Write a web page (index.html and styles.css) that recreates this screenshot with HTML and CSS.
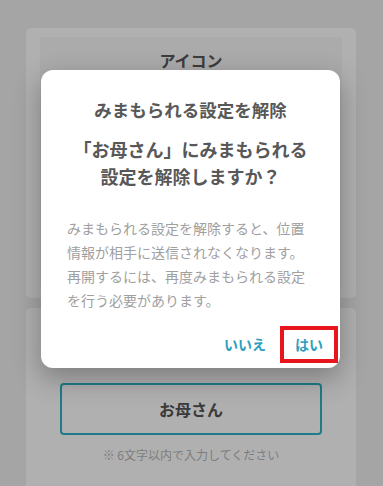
FILE: index.html
```html
<!DOCTYPE html>
<html lang="ja">
<head>
<meta charset="utf-8">
<title>みまもられる設定を解除</title>
<link rel="stylesheet" href="styles.css">
</head>
<body>
<main class="page">
  <section class="card card-icon">
    <div class="icon-area">
      <h2 class="icon-title">アイコン</h2>
    </div>
  </section>
  <section class="card card-name">
    <div class="name-input">お母さん</div>
    <p class="note">※ 6文字以内で入力してください</p>
  </section>
</main>

<div class="overlay">
  <div class="dialog" role="dialog">
    <h1 class="dialog-title">みまもられる設定を解除</h1>
    <p class="dialog-question">「お母さん」にみまもられる<br>設定を解除しますか？</p>
    <p class="dialog-body">みまもられる設定を解除すると、位置情報が相手に送信されなくなります。再開するには、再度みまもられる設定を行う必要があります。</p>
    <div class="dialog-actions">
      <button class="action">いいえ</button>
      <button class="action action-yes">はい</button>
    </div>
  </div>
</div>
</body>
</html>
```

FILE: styles.css
```css
* {
  box-sizing: border-box;
}

html, body {
  margin: 0;
  padding: 0;
}

body {
  width: 383px;
  height: 486px;
  overflow: hidden;
  background: #ededed;
  font-family: "Noto Sans CJK JP", "Noto Sans", sans-serif;
  position: relative;
}

.page {
  display: flex;
  flex-direction: column;
  gap: 10px;
  padding: 28px 27px 0 26px;
}

.card {
  background: #fdfdfd;
  border-radius: 5px;
}

.card-icon {
  height: 270px;
  padding: 9px 14px 11px;
}

.icon-area {
  height: 100%;
  background: #f5f5f5;
  padding-top: 11px;
}

.icon-title {
  margin: 0;
  font-size: 16px;
  line-height: 24px;
  font-weight: 700;
  text-align: center;
  color: #565656;
}

.card-name {
  height: 200px;
  padding: 75px 34px 0;
}

.name-input {
  height: 52px;
  border: 2px solid #2cb2c3;
  border-radius: 4px;
  display: flex;
  align-items: center;
  justify-content: center;
  font-size: 16px;
  font-weight: 700;
  color: #535353;
}

.note {
  margin: 11px 0 0;
  font-size: 12px;
  line-height: 18px;
  text-align: center;
  color: #b4b4b4;
}

.overlay {
  position: absolute;
  inset: 0;
  background: rgba(0, 0, 0, 0.3);
  display: flex;
  justify-content: center;
  align-items: flex-start;
  padding: 70px 2px 0 0;
}

.dialog {
  width: 299px;
  background: #fff;
  border-radius: 12px;
  box-shadow: 0 10px 28px rgba(0, 0, 0, 0.3);
  padding: 27px 0 5px;
  text-align: center;
}

.dialog-title {
  margin: 0;
  font-size: 17.5px;
  line-height: 26px;
  font-weight: 700;
  color: #585858;
}

.dialog-question {
  margin: 13px 0 0;
  font-size: 18px;
  line-height: 27px;
  font-weight: 700;
  color: #585858;
}

.dialog-body {
  margin: 26px 0 0;
  padding: 0 26px;
  font-size: 14px;
  line-height: 24px;
  color: #a0a0a0;
  text-align: left;
}

.dialog-actions {
  display: flex;
  justify-content: flex-end;
  margin-top: 14px;
  padding-right: 2px;
}

.action {
  font-family: inherit;
  background: none;
  border: 4px solid transparent;
  padding: 0 10px;
  height: 37px;
  font-size: 14px;
  font-weight: 700;
  line-height: 29px;
  color: #2d9fc0;
  cursor: pointer;
}

.action-yes {
  border-color: #e8141e;
  padding: 0 11px;
}
```
